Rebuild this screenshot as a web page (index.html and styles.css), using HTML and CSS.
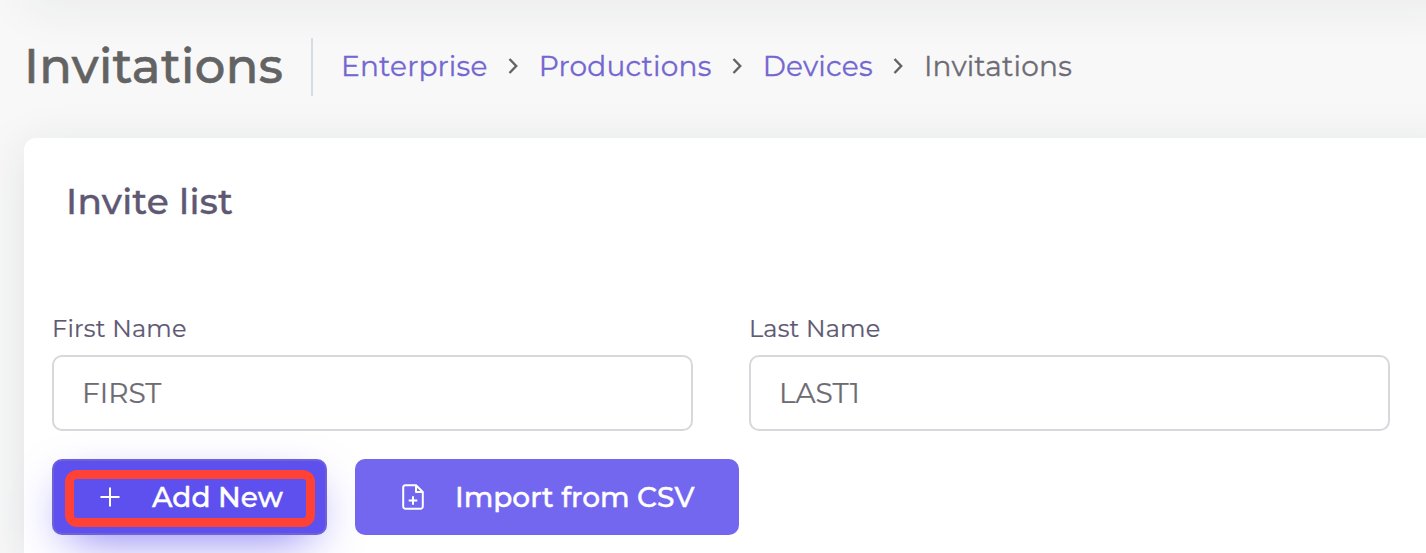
FILE: index.html
```
<!DOCTYPE html>
<html lang="en">
<head>
    <meta charset="UTF-8">
    <meta name="viewport" content="width=device-width, initial-scale=1.0">
    <title>Invitations</title>
    <link rel="stylesheet" href="styles.css">
</head>
<body>
    <div class="navbar"></div>

    <!-- Page title and breadcrumb -->
    <header class="content-header">
        <h1 class="page-title">Invitations</h1>
        <nav class="breadcrumb">
            <a class="crumb" href="#">Enterprise</a>
            <svg class="chevron" viewBox="0 0 10 18"><path d="M1.5 2 8.2 9 1.5 16"/></svg>
            <a class="crumb" href="#">Productions</a>
            <svg class="chevron" viewBox="0 0 10 18"><path d="M1.5 2 8.2 9 1.5 16"/></svg>
            <a class="crumb" href="#">Devices</a>
            <svg class="chevron" viewBox="0 0 10 18"><path d="M1.5 2 8.2 9 1.5 16"/></svg>
            <span class="crumb active">Invitations</span>
        </nav>
    </header>

    <main class="card">
        <h2 class="card-title">Invite list</h2>

        <form class="invite-form">
            <div class="form-row">
                <div class="form-group">
                    <label for="firstName">First Name</label>
                    <input type="text" id="firstName" value="FIRST">
                </div>
                <div class="form-group">
                    <label for="lastName">Last Name</label>
                    <input type="text" id="lastName" value="LAST1">
                </div>
            </div>

            <div class="actions">
                <button type="button" class="btn btn-add">
                    <svg class="icon icon-plus" viewBox="0 0 20 20"><path d="M10 .5v19M.5 10h19"/></svg>
                    <span>Add New</span>
                    <span class="highlight"></span>
                </button>
                <button type="button" class="btn btn-import">
                    <svg class="icon icon-file" viewBox="0 0 22 26">
                        <path d="M14 1.2H3.6A2.4 2.4 0 0 0 1.2 3.6v18.8a2.4 2.4 0 0 0 2.4 2.4h14.8a2.4 2.4 0 0 0 2.4-2.4V8z"/>
                        <path d="M14 1.2V8h6.8M11 12.2v8.6M6.7 16.5h8.6"/>
                    </svg>
                    <span>Import from CSV</span>
                </button>
            </div>
        </form>
    </main>
</body>
</html>
```
FILE: styles.css
```
* {
    box-sizing: border-box;
}
body {
    margin: 0;
    height: 553px;
    overflow: hidden;
    background-color: #f8f8f8;
    font-family: Montserrat, Inter, sans-serif;
    color: #6e6b7b;
}
.navbar {
    height: 40px;
    margin: -40px -40px 0 24px;
    border-radius: 10px;
    background-color: #fff;
    box-shadow: 0 8px 48px 0 rgba(34, 41, 47, 0.07);
}
.content-header {
    display: flex;
    align-items: center;
    height: 58px;
    margin: 38px 0 42px 24px;
}
.page-title {
    width: 289px;
    height: 58px;
    margin: 0;
    border-right: 2px solid #d6dce1;
    color: #636363;
    font-size: 48px;
    font-weight: 500;
    letter-spacing: 0.35px;
    line-height: 57px;
    white-space: nowrap;
    -webkit-text-stroke: 0.6px #636363;
}
.breadcrumb {
    display: flex;
    align-items: center;
    margin-left: 28px;
    font-size: 28px;
    letter-spacing: 0.2px;
    line-height: 34px;
    white-space: nowrap;
    -webkit-text-stroke: 0.3px;
}
.crumb {
    padding-bottom: 2px;
    color: #7367d0;
    text-decoration: none;
}
.crumb.active {
    color: #6e6b74;
}
.chevron {
    width: 10px;
    height: 18px;
    margin: 0 20.6px 2px;
    fill: none;
    stroke: #636363;
    stroke-width: 2.4;
}
.card {
    width: 1440px;
    height: 415px;
    margin-left: 24px;
    padding: 42px 28px 0;
    border-radius: 12px 12px 0 0;
    background-color: #fff;
    box-shadow: 0 8px 48px 0 rgba(34, 41, 47, 0.1);
}
.card-title {
    margin: 0 0 94px 14px;
    color: #5e5873;
    font-size: 36px;
    font-weight: 500;
    letter-spacing: 0.25px;
    line-height: 43px;
    -webkit-text-stroke: 0.4px #5e5873;
}
.form-row {
    display: flex;
    gap: 56px;
}
.form-group {
    width: 641px;
}
.form-group label {
    display: block;
    height: 38px;
    color: #5e5873;
    font-size: 24px;
    letter-spacing: 0.2px;
    line-height: 24px;
    -webkit-text-stroke: 0.2px;
}
.form-group input {
    display: block;
    width: 100%;
    height: 76px;
    padding: 0 28px;
    border: 2px solid #d8d7db;
    border-radius: 10px;
    background: none;
    color: #6e6b74;
    font-family: inherit;
    font-size: 28px;
    -webkit-text-stroke: 0.2px;
}
.actions {
    display: flex;
    gap: 28px;
    margin-top: 28px;
}
.btn {
    display: flex;
    align-items: center;
    position: relative;
    height: 76px;
    padding: 0;
    border: 2px solid #7367f0;
    border-radius: 10px;
    background-color: #7367f0;
    color: #fff;
    font-family: inherit;
    font-size: 28px;
    font-weight: 500;
    white-space: nowrap;
    -webkit-text-stroke: 0.4px;
}
.btn-add {
    width: 275px;
    padding-left: 46px;
    border-color: #6e62d8;
    background-color: #5e50ee;
    box-shadow: 0 16px 50px -16px #7367f0;
}
.btn-import {
    width: 384px;
    padding-left: 45px;
}
.icon {
    fill: none;
    stroke: #fff;
    stroke-width: 2;
    stroke-linejoin: round;
}
.icon-plus {
    width: 20px;
    height: 20px;
    margin-right: 32px;
}
.icon-file {
    width: 22px;
    height: 26px;
    margin-right: 31px;
}
/* red frame around the add button */
.highlight {
    position: absolute;
    top: 9px;
    left: 11px;
    width: 250px;
    height: 57px;
    border: 9px solid #ff4136;
    border-radius: 12px;
}
```
